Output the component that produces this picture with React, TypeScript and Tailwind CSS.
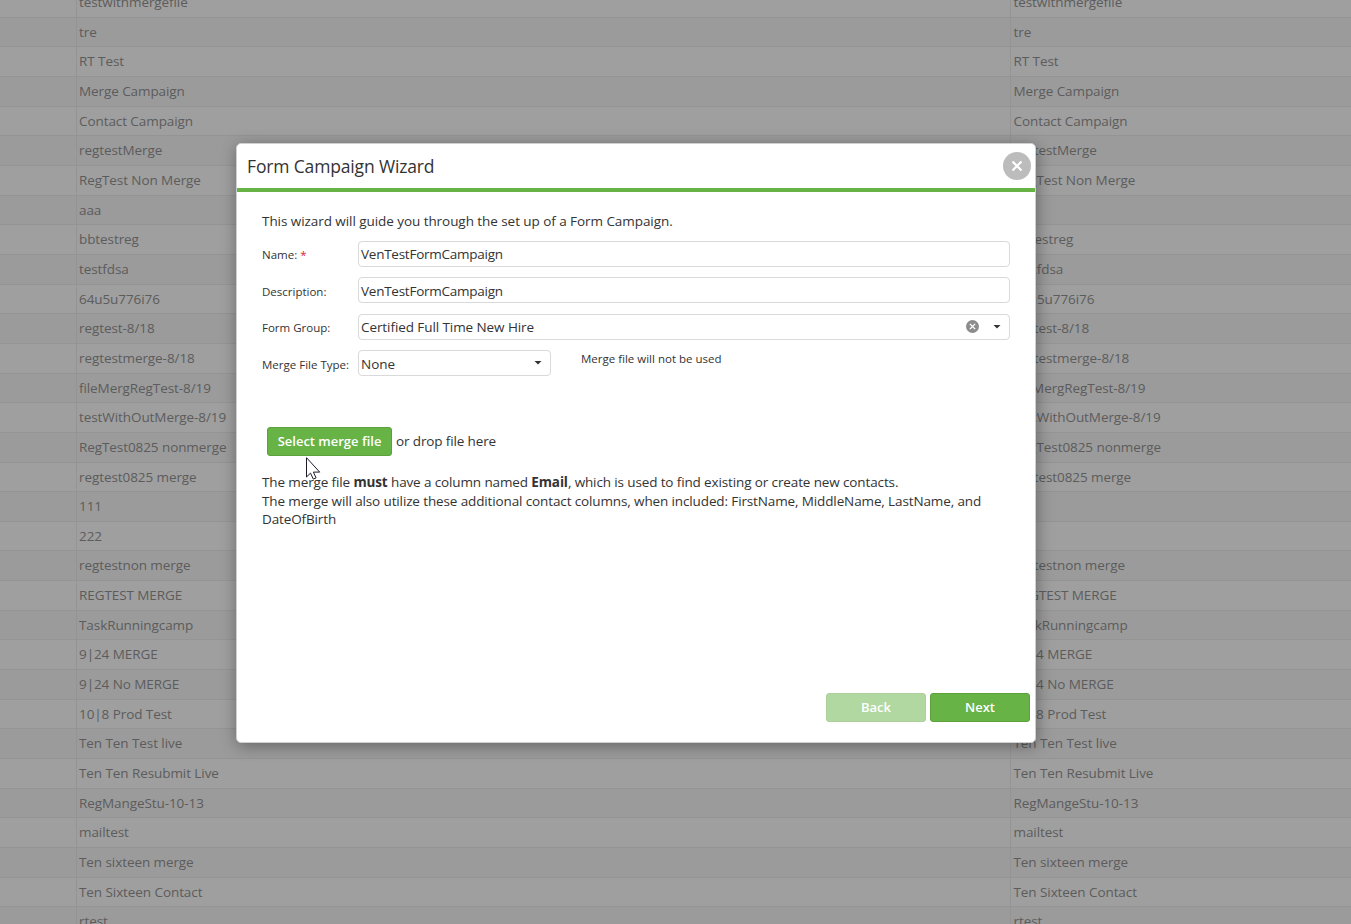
import type { ReactNode } from 'react'
import clsx from 'clsx'

const campaigns = [
  'testwithmergefile',
  'tre',
  'RT Test',
  'Merge Campaign',
  'Contact Campaign',
  'regtestMerge',
  'RegTest Non Merge',
  'aaa',
  'bbtestreg',
  'testfdsa',
  '64u5u776i76',
  'regtest-8/18',
  'regtestmerge-8/18',
  'fileMergRegTest-8/19',
  'testWithOutMerge-8/19',
  'RegTest0825 nonmerge',
  'regtest0825 merge',
  '111',
  '222',
  'regtestnon merge',
  'REGTEST MERGE',
  'TaskRunningcamp',
  '9|24 MERGE',
  '9|24 No MERGE',
  '10|8 Prod Test',
  'Ten Ten Test live',
  'Ten Ten Resubmit Live',
  'RegMangeStu-10-13',
  'mailtest',
  'Ten sixteen merge',
  'Ten Sixteen Contact',
  'rtest',
]

export default function App() {
  return (
    <div className="relative h-[924px] w-[1351px] overflow-hidden bg-[#9f9f9f] font-['Open_Sans',sans-serif] text-[13.5px] text-[#333]">
      <CampaignGrid />
      <Wizard />
      <Cursor />
    </div>
  )
}

const CampaignGrid = () => (
  <div className="-mt-[12px] tracking-[-0.08px] text-[#5c5c5c]">
    {campaigns.map((name, i) => (
      <div
        key={name}
        className={clsx(
          'grid h-[29.66px] grid-cols-[76px_934px_1fr] border-b border-[#949494] leading-[28px]',
          i % 2 ? 'bg-[#9b9b9b]' : 'bg-[#9f9f9f]'
        )}
      >
        <span />
        <span className="border-l border-[#949494] pl-0.5">{name}</span>
        <span className="border-l border-[#949494] pl-[2.5px]">{name}</span>
      </div>
    ))}
  </div>
)

const Wizard = () => (
  <div className="absolute top-[143px] left-[236px] flex h-[600px] w-[800px] flex-col rounded-[5px] border border-[#d0d0d0] bg-white shadow-[1px_3px_16px_rgba(0,0,0,0.35)]">
    <div className="flex h-12 items-center justify-between border-b-4 border-[#67b346] pr-1 pl-2.5">
      <h1 className="pt-px text-[17.5px] tracking-[-0.15px]">
        Form Campaign Wizard
      </h1>
      <button className="flex h-7 w-7 items-center justify-center rounded-full bg-[#bcbcbc]">
        <Cross className="h-3 w-3 stroke-[2.2]" />
      </button>
    </div>

    <div className="flex-1 px-[25px] pt-5">
      <p className="h-[29px] leading-[19px] tracking-[-0.06px]">
        This wizard will guide you through the set up of a Form Campaign.
      </p>

      <div className="flex flex-col gap-[10.4px]">
        <Field label="Name:" required>
          <Box className="w-[652px] tracking-[-0.25px]">
            VenTestFormCampaign
          </Box>
        </Field>
        <Field label="Description:">
          <Box className="w-[652px] pt-px tracking-[-0.25px]">
            VenTestFormCampaign
          </Box>
        </Field>
        <Field label="Form Group:">
          <Box className="w-[652px]">
            <span className="flex-1 tracking-[-0.08px]">
              Certified Full Time New Hire
            </span>
            <span className="mr-3.5 flex h-[13px] w-[13px] items-center justify-center rounded-full bg-[#8c8c8c]">
              <Cross className="h-[7px] w-[7px] stroke-[2.4]" />
            </span>
            <Caret />
          </Box>
        </Field>
        <Field label="Merge File Type:">
          <Box className="w-[193px]">
            <span className="flex-1 pt-0.5">None</span>
            <Caret />
          </Box>
          <span className="mb-2.5 ml-[30px] text-[11.5px]">
            Merge file will not be used
          </span>
        </Field>
      </div>

      <div className="mt-[51px] ml-[5px] flex items-center gap-1">
        <Button className="w-[125px]">Select merge file</Button>
        <span className="pb-0.5 tracking-[-0.13px]">or drop file here</span>
      </div>

      <p className="mt-[17px] w-[745px] leading-[18.4px] tracking-[-0.125px]">
        The merge file <b>must</b> have a column named <b>Email</b>, which is
        used to find existing or create new contacts.
        <br />
        The merge will also utilize these additional contact columns, when
        included: FirstName, MiddleName, LastName, and
        <br />
        DateOfBirth
      </p>
    </div>

    <div className="flex justify-end gap-1 pr-[5px] pb-5">
      <Button className="w-[100px] opacity-50">Back</Button>
      <Button className="w-[100px]">Next</Button>
    </div>
  </div>
)

type FieldProps = { label: string; required?: boolean; children: ReactNode }

const Field = ({ label, required, children }: FieldProps) => (
  <div className="flex h-[26px] items-center">
    <label className="w-24 pt-[2px] text-[11.5px] whitespace-nowrap">
      {label}
      {required && <span className="text-[#e0242b]"> *</span>}
    </label>
    {children}
  </div>
)

type BoxProps = { className?: string; children: ReactNode }

const Box = ({ className, children }: BoxProps) => (
  <div
    className={clsx(
      'flex h-[26px] items-center rounded-[4px] border border-[#d9d9d9] pr-2 pl-0.5',
      className
    )}
  >
    {children}
  </div>
)

const Button = ({ className, children }: BoxProps) => (
  <button
    className={clsx(
      'h-[29px] rounded-[3px] border border-[#5ba13c] bg-[#67b346] text-[13px] font-semibold whitespace-nowrap text-white',
      className
    )}
  >
    {children}
  </button>
)

const Cross = ({ className }: { className?: string }) => (
  <svg viewBox="0 0 12 12" fill="none" stroke="#fff" className={className}>
    <path d="M1.5 1.5l9 9M10.5 1.5l-9 9" />
  </svg>
)

const Caret = () => (
  <svg viewBox="0 0 8 4" className="h-1 w-2 fill-[#333]">
    <path d="M.5 0h7L4 3.6z" />
  </svg>
)

const Cursor = () => (
  <svg
    viewBox="0 0 16 24"
    className="absolute top-[457px] left-[306px] h-6 w-4 fill-white stroke-[#1b1b2b]"
  >
    <path d="M.5.7v19.3l4-3.9 2.8 6 2.8-1.2-2.7-5.8h6.3z" />
  </svg>
)
